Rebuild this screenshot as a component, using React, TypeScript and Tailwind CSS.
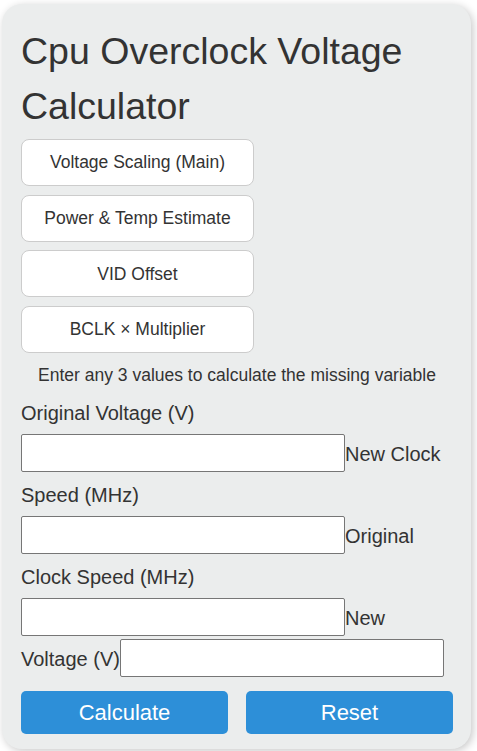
import React from "react";

const font = { fontFamily: '"Liberation Sans", Arial, sans-serif' };

function Field({ label }: { label: string }) {
  return (
    <>
      <span>{label}</span>
      <span className="inline-block overflow-hidden align-[-11px] w-[324px] h-[38px]">
        <input
          type="text"
          className="block w-full h-full border border-[#767676] rounded-[2px] bg-white px-2 text-[16px] outline-none"
        />
      </span>
    </>
  );
}

export default function App() {
  const tabs = [
    "Voltage Scaling (Main)",
    "Power & Temp Estimate",
    "VID Offset",
    "BCLK × Multiplier",
  ];
  return (
    <div className="bg-white min-h-[751px] pt-[4px] pl-[2px]" style={font}>
      <div className="w-[469px] bg-[#ebeded] rounded-[20px] shadow-[2px_2px_8px_rgba(0,0,0,0.22)] pt-[20px] pl-[19px] pr-[18px] pb-[15px] text-[#333333]">
        <h1 className="text-[37.5px] leading-[55px] font-normal m-0 mb-[5px]">
          Cpu Overclock Voltage Calculator
        </h1>
        <div className="flex flex-col gap-[8.7px]">
          {tabs.map((t) => (
            <button
              key={t}
              className="w-[233px] h-[47px] bg-white border border-[#cccccc] rounded-[8px] text-[17.5px] text-[#333333] text-center"
            >
              {t}
            </button>
          ))}
        </div>
        <p className="text-center text-[17.5px] leading-[20px] mt-[12px] mb-[8px]">
          Enter any 3 values to calculate the missing variable
        </p>
        <div className="text-[20px] leading-[41px]">
          <Field label="Original Voltage (V)" />
          <Field label="New Clock Speed (MHz)" />
          <Field label="Original Clock Speed (MHz)" />
          <Field label="New Voltage (V)" />
        </div>
        <div className="flex gap-[18px] mt-[11px]">
          <button className="w-[207px] h-[43px] bg-[#2d8fd8] text-white rounded-[5px] text-[22px]">
            Calculate
          </button>
          <button className="w-[207px] h-[43px] bg-[#2d8fd8] text-white rounded-[5px] text-[22px]">
            Reset
          </button>
        </div>
      </div>
    </div>
  );
}
